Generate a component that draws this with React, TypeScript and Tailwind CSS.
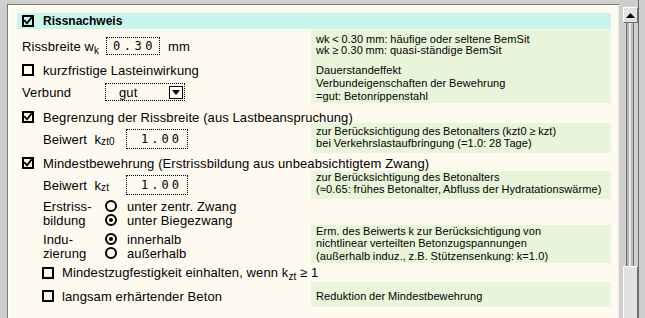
import React from "react";

const Check = ({ checked }: { checked?: boolean }) => (
  <span className="inline-flex w-[12px] h-[12px] border-2 border-black items-center justify-center shrink-0 box-border">
    {checked && (
      <svg width="8" height="8" viewBox="0 0 8 8">
        <path d="M0.8 3.8 L3 6.3 L7.2 1" stroke="black" strokeWidth="1.9" fill="none" strokeLinecap="square" />
      </svg>
    )}
  </span>
);

const Radio = ({ on }: { on?: boolean }) => (
  <span className="inline-flex w-[12px] h-[12px] rounded-full border-2 border-black items-center justify-center shrink-0 box-border">
    {on && <span className="block w-[4px] h-[4px] rounded-full bg-black" />}
  </span>
);

const Field = ({ value, w }: { value: string; w: string }) => (
  <span
    className={`${w} h-[20px] border border-dotted border-black flex items-center justify-end pr-[5px] font-['DejaVu_Sans_Mono',monospace] text-[12px] tracking-[3px]`}
  >
    {value}
  </span>
);

const Small = ({ children, h }: { children: React.ReactNode; h: string }) => (
  <div className={`${h} shrink-0 flex items-center whitespace-nowrap`}>{children}</div>
);

const green = "w-[300px] bg-[#e8f5da] pl-[5px] text-[11px] [word-spacing:-0.5px] flex flex-col";

export default function App() {
  return (
    <div className="w-[645px] h-[318px] bg-[#cecece] flex overflow-hidden text-black font-['Liberation_Sans',Arial,sans-serif] text-[13px] leading-[15px] tracking-[0.1px]">
      {/* panel */}
      <div className="w-[619px] h-full pl-[7px] pt-[4px] flex">
        <div className="flex-1 h-full border-l border-t border-[#777777]">
          <div className="h-full border-l border-t border-white border-r border-r-[#ececec] bg-[#fffaf0] pl-[8px] pr-[7px] pt-[7px] flex flex-col">
            {/* header */}
            <div className="h-[16px] mb-[1px] bg-[#c9f6ec] flex items-center pl-[5px] gap-[9px]">
              <Check checked />
              <span className="font-bold text-[12px] tracking-normal">Rissnachweis</span>
            </div>

            {/* group 1 */}
            <div className="h-[73px] flex">
              <div className="w-[294px] flex flex-col pt-[4px] pl-[5px]">
                <div className="h-[24px] flex items-center">
                  <span className="w-[84px]">
                    Rissbreite w<sub className="text-[10px] bottom-[-3px]">k</sub>
                  </span>
                  <span className="w-[54px] h-[18px] border border-dotted border-black flex items-center justify-center pl-[3px] font-['DejaVu_Sans_Mono',monospace] text-[12px] tracking-[3.5px]">
                    0.30
                  </span>
                  <span className="ml-[8px]">mm</span>
                </div>
                <div className="h-[24px] flex items-center gap-[9px]">
                  <Check />
                  <span>kurzfristige Lasteinwirkung</span>
                </div>
                <div className="h-[20px] flex items-center">
                  <span className="w-[83px]">Verbund</span>
                  <span className="w-[80px] h-[18px] border border-dotted border-black flex items-center justify-between pl-[13px] pr-[1px]">
                    <span>gut</span>
                    <span className="w-[14px] h-[13px] border-[1.5px] border-black bg-white flex items-center justify-center">
                      <svg width="8" height="5" viewBox="0 0 8 5">
                        <path d="M0 0 H8 L4 5 Z" fill="black" />
                      </svg>
                    </span>
                  </span>
                </div>
              </div>
              <div className={`${green} pt-[4px]`}>
                <Small h="h-[11px]">wk &lt; 0.30 mm: häufige oder seltene BemSit</Small>
                <Small h="h-[11px]">wk ≥ 0.30 mm: quasi-ständige BemSit</Small>
                <div className="h-[8px] shrink-0" />
                <Small h="h-[13px]">Dauerstandeffekt</Small>
                <Small h="h-[13px]">Verbundeigenschaften der Bewehrung</Small>
                <Small h="h-[13px]">=gut: Betonrippenstahl</Small>
              </div>
            </div>

            {/* Begrenzung */}
            <div className="relative z-10 h-[20px] pt-[8px] pl-[5px] flex items-center gap-[9px] whitespace-nowrap">
              <Check checked />
              <span>Begrenzung der Rissbreite (aus Lastbeanspruchung)</span>
            </div>

            {/* group 2 */}
            <div className="h-[30px] flex">
              <div className="w-[294px] pl-[26px] pt-[6px] flex items-start">
                <span className="w-[83px] h-[20px] flex items-center">
                  Beiwert&nbsp;&nbsp;k<sub className="text-[10px] bottom-[-3px]">zt0</sub>
                </span>
                <Field value="1.00" w="w-[62px]" />
              </div>
              <div className={`${green} pt-[2px]`}>
                <Small h="h-[12px]">zur Berücksichtigung des Betonalters (kzt0 ≥ kzt)</Small>
                <Small h="h-[12px]">bei Verkehrslastaufbringung (=1.0: 28 Tage)</Small>
              </div>
            </div>

            {/* Mindestbewehrung */}
            <div className="relative z-10 h-[18px] pt-[2px] pl-[5px] flex items-center gap-[9px] whitespace-nowrap">
              <Check checked />
              <span>Mindestbewehrung (Erstrissbildung aus unbeabsichtigtem Zwang)</span>
            </div>

            {/* group 3 */}
            <div className="h-[28px] flex">
              <div className="w-[294px] pl-[26px] pt-[4px] flex items-start">
                <span className="w-[83px] h-[20px] flex items-center">
                  Beiwert&nbsp;&nbsp;k<sub className="text-[10px] bottom-[-3px]">zt</sub>
                </span>
                <Field value="1.00" w="w-[62px]" />
              </div>
              <div className={`${green} pt-0`}>
                <Small h="h-[12px]">zur Berücksichtigung des Betonalters</Small>
                <Small h="h-[12px]">(≈0.65: frühes Betonalter, Abfluss der Hydratationswärme)</Small>
              </div>
            </div>

            {/* radios */}
            <div className="h-[64px] flex">
              <div className="w-[294px] pl-[26px] flex flex-col">
                <div className="h-[14px] flex items-center">
                  <span className="w-[62px]">Erstriss-</span>
                  <Radio />
                  <span className="ml-[10px]">unter zentr. Zwang</span>
                </div>
                <div className="h-[14px] flex items-center">
                  <span className="w-[62px]">bildung</span>
                  <Radio on />
                  <span className="ml-[10px]">unter Biegezwang</span>
                </div>
                <div className="h-[5px]" />
                <div className="h-[14px] flex items-center">
                  <span className="w-[62px]">Indu-</span>
                  <Radio on />
                  <span className="ml-[10px]">innerhalb</span>
                </div>
                <div className="h-[14px] flex items-center">
                  <span className="w-[62px]">zierung</span>
                  <Radio />
                  <span className="ml-[10px]">außerhalb</span>
                </div>
              </div>
              <div className={`${green} mt-[26px] h-[38px]`}>
                <Small h="h-[12px]">Erm. des Beiwerts k zur Berücksichtigung von</Small>
                <Small h="h-[13px]">nichtlinear verteilten Betonzugspannungen</Small>
                <Small h="h-[13px]">(außerhalb induz., z.B. Stützensenkung: k=1.0)</Small>
              </div>
            </div>

            {/* Mindestzug */}
            <div className="h-[19px] pl-[25px] flex items-center gap-[8px] whitespace-nowrap">
              <Check />
              <span>
                Mindestzugfestigkeit einhalten, wenn k<sub className="text-[10px] bottom-[-3px]">zt</sub> ≥ 1
              </span>
            </div>

            {/* group 5 */}
            <div className="h-[25px] flex">
              <div className="w-[294px] pl-[25px] pt-[3px] flex items-center gap-[8px]">
                <Check />
                <span>langsam erhärtender Beton</span>
              </div>
              <div className={`${green} pt-[8px]`}>
                <Small h="h-[13px]">Reduktion der Mindestbewehrung</Small>
              </div>
            </div>
          </div>
        </div>
      </div>

      {/* scrollbar */}
      <div className="w-[26px] h-full flex">
        <div className="w-[4px] h-full" />
        <div className="w-[15px] h-full flex flex-col pt-[7px]">
          <div className="h-[16px] bg-[#e2e2e2] border-t border-l border-white border-r border-b border-r-[#6e6e6e] border-b-[#6e6e6e] flex items-center justify-center">
            <svg width="9" height="5" viewBox="0 0 9 5">
              <path d="M0 5 H9 L4.5 0 Z" fill="black" />
            </svg>
          </div>
          <div className="flex-1 flex">
            <div className="w-[3px] bg-[#cecece]" />
            <div className="w-[1px] bg-[#6e6e6e]" />
            <div className="w-[2px] bg-[#b8b8b8]" />
            <div className="w-[2px] bg-[#e8e8e8]" />
            <div className="w-[2px] bg-[#b8b8b8]" />
            <div className="w-[1px] bg-[#6e6e6e]" />
            <div className="flex-1 bg-[#cecece]" />
          </div>
          <div className="h-[52px] bg-[#e2e2e2] border-t border-l border-white border-r border-r-[#6e6e6e]" />
        </div>
        <div className="w-[1px] h-full bg-[#6e6e6e]" />
        <div className="flex-1 h-full" />
      </div>
    </div>
  );
}
